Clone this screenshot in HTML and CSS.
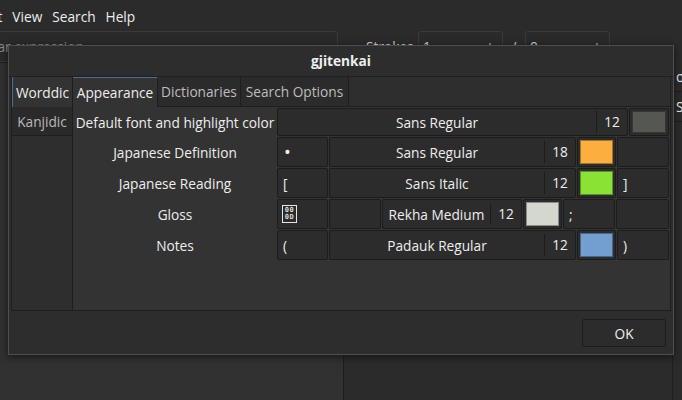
FILE: index.html
```html
<!DOCTYPE html>
<html>
<head>
<meta charset="utf-8">
<link rel="stylesheet" href="styles.css">
</head>
<body>
<div class="app">
  <div class="menubar">
    <span class="menu">Edit</span><span class="menu">View</span><span class="menu">Search</span><span class="menu">Help</span>
  </div>
  <div class="toolbar">
    <div class="search"><span class="placeholder">Regular expression</span></div>
    <div class="strokes">
      <span class="strokes-label">Strokes</span>
      <div class="spin"><span class="spin-val">1</span><span class="spin-btn">−</span><span class="spin-btn">+</span></div>
      <span class="slash">/</span>
      <div class="spin"><span class="spin-val">0</span><span class="spin-btn">−</span><span class="spin-btn">+</span></div>
    </div>
  </div>
  <div class="main">
    <div class="leftpane"></div>
    <div class="rightpane">
      <div class="results">
        <div class="result-row">o</div>
        <div class="result-row">S</div>
      </div>
    </div>
  </div>
</div>

<div class="dialog">
  <div class="titlebar">gjitenkai</div>
  <div class="dialog-body">
    <div class="notebook">
      <div class="side-tabs">
        <div class="side-tab active">Worddic</div>
        <div class="side-tab">Kanjidic</div>
      </div>
      <div class="page">
        <div class="top-tabs">
          <div class="top-tab t-app active">Appearance</div>
          <div class="top-tab t-dic">Dictionaries</div>
          <div class="top-tab t-opt">Search Options</div>
        </div>
        <div class="content">
          <div class="row r1">
            <div class="label">Default font and highlight color</div>
            <div class="cell fontbtn w351"><span class="fname">Sans Regular</span><span class="fsize">12</span></div>
            <div class="cell colorbtn w40"><span class="swatch c-gray"></span></div>
          </div>
          <div class="row">
            <div class="label">Japanese Definition</div>
            <div class="cell entry w51"><span class="bullet">•</span></div>
            <div class="cell fontbtn w247"><span class="fname">Sans Regular</span><span class="fsize">18</span></div>
            <div class="cell colorbtn w39"><span class="swatch c-orange"></span></div>
            <div class="cell entry w52"></div>
          </div>
          <div class="row">
            <div class="label">Japanese Reading</div>
            <div class="cell entry w51">[</div>
            <div class="cell fontbtn w247"><span class="fname">Sans Italic</span><span class="fsize">12</span></div>
            <div class="cell colorbtn w39"><span class="swatch c-green"></span></div>
            <div class="cell entry w52">]</div>
          </div>
          <div class="row">
            <div class="label">Gloss</div>
            <div class="cell entry w51"><span class="hexbox"><span>00</span><span>0D</span></span></div>
            <div class="cell entry w52"></div>
            <div class="cell fontbtn w140"><span class="fname">Rekha Medium</span><span class="fsize">12</span></div>
            <div class="cell colorbtn w39"><span class="swatch c-light"></span></div>
            <div class="cell entry w52">;</div>
            <div class="cell entry w53"></div>
          </div>
          <div class="row">
            <div class="label">Notes</div>
            <div class="cell entry w51">(</div>
            <div class="cell fontbtn w247"><span class="fname">Padauk Regular</span><span class="fsize">12</span></div>
            <div class="cell colorbtn w39"><span class="swatch c-blue"></span></div>
            <div class="cell entry w52">)</div>
          </div>
        </div>
      </div>
    </div>
  </div>
  <div class="actions"><button class="ok">OK</button></div>
</div>
</body>
</html>
```

FILE: styles.css
```css
* { box-sizing: border-box; }
html, body { margin: 0; padding: 0; }
body {
  width: 682px;
  height: 400px;
  overflow: hidden;
  position: relative;
  background: #2b2b2b;
  font-family: "Open Sans", "DejaVu Sans", sans-serif;
  font-size: 13.7px;
  color: #eeeeec;
}

/* background window */
.app { display: flex; flex-direction: column; height: 400px; }
.menubar {
  height: 31px;
  display: flex;
  align-items: center;
  margin-left: -27px;
  padding-top: 2px;
}
.menu { padding: 0 5px; }
.toolbar { height: 31px; display: flex; }
.search {
  width: 383px;
  margin-left: -45px;
  border: 1px solid #3a3a3a;
  border-radius: 3px;
  background: #2a2a2a;
  padding-left: 6px;
  display: flex;
  align-items: center;
  color: #8b8b8b;
}
.strokes { display: flex; align-items: center; margin-left: 28px; color: #cfcfcf; }
.strokes-label { width: 52px; }
.spin {
  width: 85px;
  height: 31px;
  display: flex;
  align-items: center;
  border: 1px solid #3a3a3a;
  border-radius: 3px;
  background: #2a2a2a;
}
.spin-val { flex: 1; padding-left: 4px; }
.spin-btn { width: 24px; text-align: center; }
.slash { width: 22px; text-align: center; }
.main { flex: 1; display: flex; }
.leftpane { width: 344px; background: #313131; border-right: 1px solid #1e1e1e; border-top: 1px solid #1e1e1e; }
.rightpane { flex: 1; display: flex; justify-content: flex-end; background: #2b2b2b; }
.results { width: 10px; border-left: 1px solid #1e1e1e; overflow: hidden; }
.result-row { height: 30px; line-height: 30px; padding-left: 3px; border-bottom: 1px solid #1e1e1e; }

/* dialog */
.dialog {
  position: absolute;
  left: 8px;
  top: 45px;
  width: 666px;
  height: 310px;
  border: 1px solid #4e4e4e;
  background: #2d2d2d;
  box-shadow: 0 2px 8px rgba(0, 0, 0, 0.55);
  display: flex;
  flex-direction: column;
}
.titlebar {
  height: 31px;
  border-bottom: 1px solid #1f1f1f;
  display: flex;
  align-items: center;
  justify-content: center;
  font-weight: bold;
  padding-bottom: 1px;
}
.dialog-body { padding: 0 2px; }
.notebook {
  height: 234px;
  display: flex;
  border-left: 1px solid #1e1e1e;
  border-right: 1px solid #1e1e1e;
  border-bottom: 1px solid #1e1e1e;
}
.side-tabs {
  width: 61px;
  border-right: 1px solid #1e1e1e;
  background: #2e2e2e;
  display: flex;
  flex-direction: column;
}
.side-tab {
  height: 29px;
  display: flex;
  align-items: center;
  justify-content: center;
  background: #2a2a2a;
  color: #b9b9b9;
  border-bottom: 1px solid #1e1e1e;
}
.side-tab.active {
  height: 30px;
  background: #333333;
  color: #eeeeec;
  border-left: 1px solid #4f6f92;
  border-bottom: none;
}
.page { flex: 1; display: flex; flex-direction: column; }
.top-tabs {
  height: 30px;
  display: flex;
  background: #2e2e2e;
  border-bottom: 1px solid #1e1e1e;
}
.top-tab {
  display: flex;
  align-items: center;
  justify-content: center;
  background: #2b2b2b;
  color: #bdbdbd;
  border-right: 1px solid #1e1e1e;
  white-space: nowrap;
}
.top-tab.active {
  background: #333333;
  color: #eeeeec;
  border-top: 1px solid #4f6f92;
  height: 30px;
  margin-bottom: -1px;
}
.t-app { width: 85px; }
.t-dic { width: 83px; }
.t-opt { width: 108px; }
.content {
  flex: 1;
  background: #333333;
  padding: 1px 0 0 1px;
  display: flex;
  flex-direction: column;
  gap: 1px;
}
.row { display: flex; gap: 1px; height: 30px; }
.row.r1 { height: 28px; }
.label {
  width: 202px;
  display: flex;
  align-items: center;
  justify-content: center;
  white-space: nowrap;
}
.cell {
  border: 1px solid #1c1c1c;
  border-radius: 2px;
  background: #2c2c2c;
  display: flex;
  align-items: center;
}
.entry { padding-left: 5px; }
.bullet { font-size: 18px; line-height: 18px; margin-left: 1px; }
.fontbtn .fname { flex: 1; text-align: center; white-space: nowrap; }
.fontbtn .fsize {
  width: 31px;
  text-align: center;
  border-left: 1px solid #1c1c1c;
  line-height: 22px;
}
.colorbtn { padding: 2px; }
.swatch { flex: 1; height: 100%; border: 1px solid rgba(0, 0, 0, 0.35); }
.c-gray { background: #555753; }
.c-orange { background: #fcaf3e; }
.c-green { background: #8ae234; }
.c-light { background: #d3d7cf; }
.c-blue { background: #729fcf; }
.w351 { width: 351px; }
.w247 { width: 247px; }
.w140 { width: 140px; }
.w40 { width: 40px; }
.w39 { width: 39px; }
.w51 { width: 51px; }
.w52 { width: 52px; }
.w53 { width: 53px; }
.hexbox {
  width: 15px;
  height: 18px;
  border: 1px solid #e6e6e6;
  display: flex;
  flex-direction: column;
  align-items: center;
  justify-content: center;
  font-family: "DejaVu Sans Mono", monospace;
  font-size: 7px;
  font-weight: bold;
  line-height: 7px;
  letter-spacing: 0.5px;
  color: #dcdcdc;
  margin-left: -1px;
}
.actions {
  flex: 1;
  display: flex;
  justify-content: flex-end;
  align-items: flex-start;
  padding: 8px 7px 0 0;
}
.ok {
  width: 84px;
  height: 28px;
  border: 1px solid #1c1c1c;
  border-radius: 2px;
  background: #2c2c2c;
  color: #eeeeec;
  font-family: "Open Sans", "DejaVu Sans", sans-serif;
  font-size: 13.7px;
}
```
